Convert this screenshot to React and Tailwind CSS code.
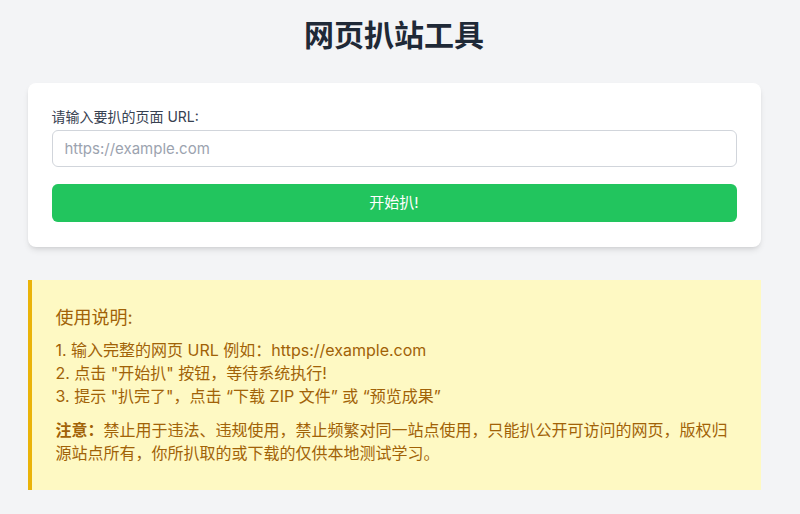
export default function App() {
  return (
    <div className="min-h-[514px] bg-[#f3f4f6] font-['Inter','Noto_Sans_CJK_SC',sans-serif]">
      <div className="w-[788px] pt-[14px] pb-6">
        <div className="mx-auto w-[733px]">
          <h1 className="text-center text-[30px] font-bold leading-[42px] text-[#1f2937]">网页扒站工具</h1>

          <div className="mt-[27px] rounded-lg bg-white px-6 pt-[24px] pb-[25px] shadow-md">
            <label className="block text-[14px] leading-[20px] text-[#374151]">请输入要扒的页面 URL:</label>
            <input
              className="mt-[3px] block h-[37px] w-full rounded-md border border-[#d1d5db] px-3 text-[15px] text-gray-800 placeholder:text-[#9ca3af] outline-none"
              placeholder="https://example.com"
            />
            <button className="mt-[17px] block h-[38px] w-full rounded-md bg-[#22c55e] text-[15px] text-white">开始扒!</button>
          </div>

          <div className="mt-[33px] h-[210px] border-l-4 border-[#eab308] bg-[#fef9c3] pl-6 pr-[30px] pt-[25px] text-[#a16207]">
            <h2 className="text-[18px] leading-[26px]">使用说明:</h2>
            <ol className="mt-[8px] text-[16px] leading-[23px]">
              <li>1. 输入完整的网页 URL 例如：https://example.com</li>
              <li>2. 点击 "开始扒" 按钮，等待系统执行!</li>
              <li>3. 提示 "扒完了"，点击 “下载 ZIP 文件” 或 “预览成果”</li>
            </ol>
            <p className="mt-[11px] text-[16px] leading-[23px]">
              <strong className="font-bold">注意：</strong>禁止用于违法、违规使用，禁止频繁对同一站点使用，只能扒公开可访问的网页，版权归源站点所有，你所扒取的或下载的仅供本地测试学习。
            </p>
          </div>
        </div>
      </div>
    </div>
  )
}
